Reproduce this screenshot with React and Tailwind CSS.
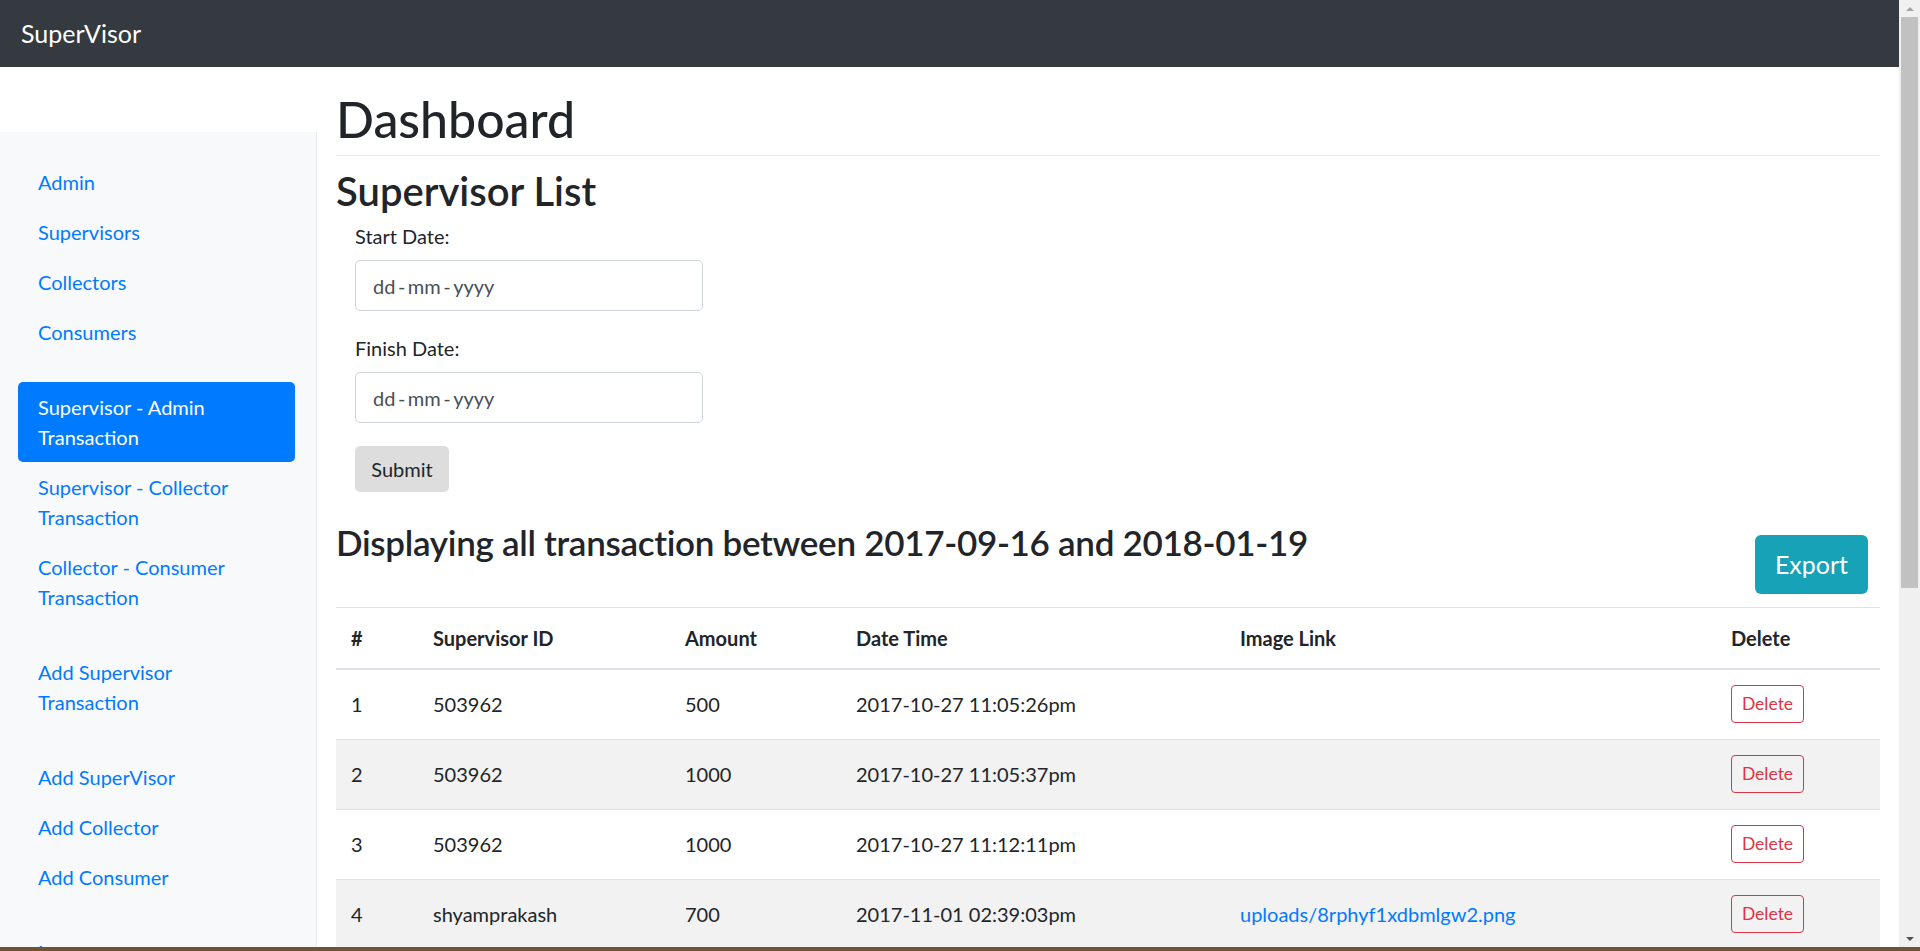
const sideGroups = [
  [{ label: 'Admin' }, { label: 'Supervisors' }, { label: 'Collectors' }, { label: 'Consumers' }],
  [
    { label: 'Supervisor - Admin\nTransaction', active: true },
    { label: 'Supervisor - Collector\nTransaction' },
    { label: 'Collector - Consumer\nTransaction' },
  ],
  [{ label: 'Add Supervisor\nTransaction' }],
  [{ label: 'Add SuperVisor' }, { label: 'Add Collector' }, { label: 'Add Consumer' }],
  [{ label: 'Logout' }],
];

const rows = [
  { n: 1, id: '503962', amount: '500', time: '2017-10-27 11:05:26pm', link: '' },
  { n: 2, id: '503962', amount: '1000', time: '2017-10-27 11:05:37pm', link: '' },
  { n: 3, id: '503962', amount: '1000', time: '2017-10-27 11:12:11pm', link: '' },
  { n: 4, id: 'shyamprakash', amount: '700', time: '2017-11-01 02:39:03pm', link: 'uploads/8rphyf1xdbmlgw2.png' },
  { n: 5, id: 'shyamprakash', amount: '300', time: '2017-11-02 10:14:45am', link: '' },
];

// date inputs in the shot show spaced dashes
const DATE_HINT = 'dd\u2009-\u2009mm\u2009-\u2009yyyy';

function Sidebar() {
  return (
    <nav className="w-[317px] shrink-0 mt-[65px] bg-[#f8f9fa] border-r border-[#ececec] pt-[25px] pl-[18px] pr-[21px]">
      {sideGroups.map((group, gi) => (
        <ul key={gi} className="mb-[25px]">
          {group.map((item) => (
            <li key={item.label}>
              <a
                href="#"
                className={
                  item.active
                    ? 'block px-[20px] py-[10px] leading-[30px] text-[20px] whitespace-pre-line rounded-[5px] bg-[#007bff] text-white'
                    : 'block px-[20px] py-[10px] leading-[30px] text-[20px] whitespace-pre-line text-[#007bff]'
                }
              >
                {item.label}
              </a>
            </li>
          ))}
        </ul>
      ))}
    </nav>
  );
}

function DateField({ label, className }) {
  return (
    <div className={className}>
      <label className="block leading-[30px] text-[20px] text-[#212529]">{label}</label>
      <input
        type="text"
        placeholder={DATE_HINT}
        className="mt-[9px] block h-[51px] w-[348px] rounded-[5px] border border-[#ced4da] bg-white px-[17px] text-[20px] text-[#495057] placeholder:text-[#495057] outline-none"
      />
    </div>
  );
}

function Scrollbar() {
  return (
    <div className="w-[21px] shrink-0 bg-[#f0f0f0] flex flex-col">
      <div className="h-[17px] flex items-center justify-center">
        <div className="w-0 h-0 border-l-[4px] border-r-[4px] border-b-[4px] border-l-transparent border-r-transparent border-b-[#a3a3a3]" />
      </div>
      <div className="h-[571px] mx-[2px] bg-[#c1c1c1]" />
      <div className="flex-1" />
      <div className="h-[17px] flex items-center justify-center">
        <div className="w-0 h-0 border-l-[4px] border-r-[4px] border-t-[4px] border-l-transparent border-r-transparent border-t-[#505050]" />
      </div>
    </div>
  );
}

export default function App() {
  const th = 'px-[15px] py-[15px] leading-[30px] text-left font-bold border-t border-b-2 border-[#dee2e6]';
  const td = 'px-[15px] py-[15px] leading-[30px] align-middle border-t border-[#dee2e6]';

  return (
    <div className="h-[951px] w-[1920px] overflow-hidden flex flex-col font-['Lato','Segoe_UI',sans-serif] text-[#212529]">
      <div className="flex-1 min-h-0 flex">
        <div className="flex-1 min-w-0 flex flex-col bg-white">
          <header className="h-[67px] shrink-0 bg-[#343a40] flex items-center px-[21px]">
            <span className="text-[25px] text-white">SuperVisor</span>
          </header>

          <div className="flex-1 min-h-0 flex">
            <Sidebar />

            <main className="flex-1 min-w-0 px-[19px] pt-[22px]">
              <h1 className="text-[50px] leading-[60px] font-medium pb-[6px] border-b border-[#e9ecef]">Dashboard</h1>
              <h2 className="mt-[11px] text-[40px] leading-[48px] font-semibold">Supervisor List</h2>

              <form className="px-[19px] mt-[6px]">
                <DateField label="Start Date:" />
                <DateField label="Finish Date:" className="mt-[22px]" />
                <button
                  type="button"
                  className="mt-[23px] h-[46px] w-[94px] rounded-[5px] bg-[#dddddd] text-[20px] text-[#212529]"
                >
                  Submit
                </button>
              </form>

              <div className="mt-[29px] flex items-start justify-between">
                <h3 className="text-[35px] leading-[42px] font-semibold tracking-[-0.3px]">
                  Displaying all transaction between 2017-09-16 and 2018-01-19
                </h3>
                <button
                  type="button"
                  className="mt-[14px] mr-[12px] h-[59px] w-[113px] rounded-[6px] bg-[#17a2b8] text-[25px] text-white"
                >
                  Export
                </button>
              </div>

              <table className="mt-[13px] w-full table-fixed border-collapse text-[20px]">
                <colgroup>
                  <col className="w-[82px]" />
                  <col className="w-[252px]" />
                  <col className="w-[171px]" />
                  <col className="w-[384px]" />
                  <col className="w-[491px]" />
                  <col />
                </colgroup>
                <thead>
                  <tr>
                    <th className={th}>#</th>
                    <th className={th}>Supervisor ID</th>
                    <th className={th}>Amount</th>
                    <th className={th}>Date Time</th>
                    <th className={th}>Image Link</th>
                    <th className={th}>Delete</th>
                  </tr>
                </thead>
                <tbody>
                  {rows.map((r) => (
                    <tr key={r.n} className={r.n % 2 === 0 ? 'h-[70px] bg-[#f2f2f2]' : 'h-[70px]'}>
                      <td className={td}>{r.n}</td>
                      <td className={td}>{r.id}</td>
                      <td className={td}>{r.amount}</td>
                      <td className={td}>{r.time}</td>
                      <td className={td}>
                        {!!r.link && (
                          <a href="#" className="text-[#007bff]">
                            {r.link}
                          </a>
                        )}
                      </td>
                      <td className={td}>
                        <button
                          type="button"
                          className="h-[38px] w-[73px] rounded-[4px] border border-[#dc3545] text-[17.5px] text-[#dc3545]"
                        >
                          Delete
                        </button>
                      </td>
                    </tr>
                  ))}
                </tbody>
              </table>
            </main>
          </div>
        </div>
        <Scrollbar />
      </div>
      <div className="h-[4px] shrink-0 bg-[#6e5435]" />
    </div>
  );
}
